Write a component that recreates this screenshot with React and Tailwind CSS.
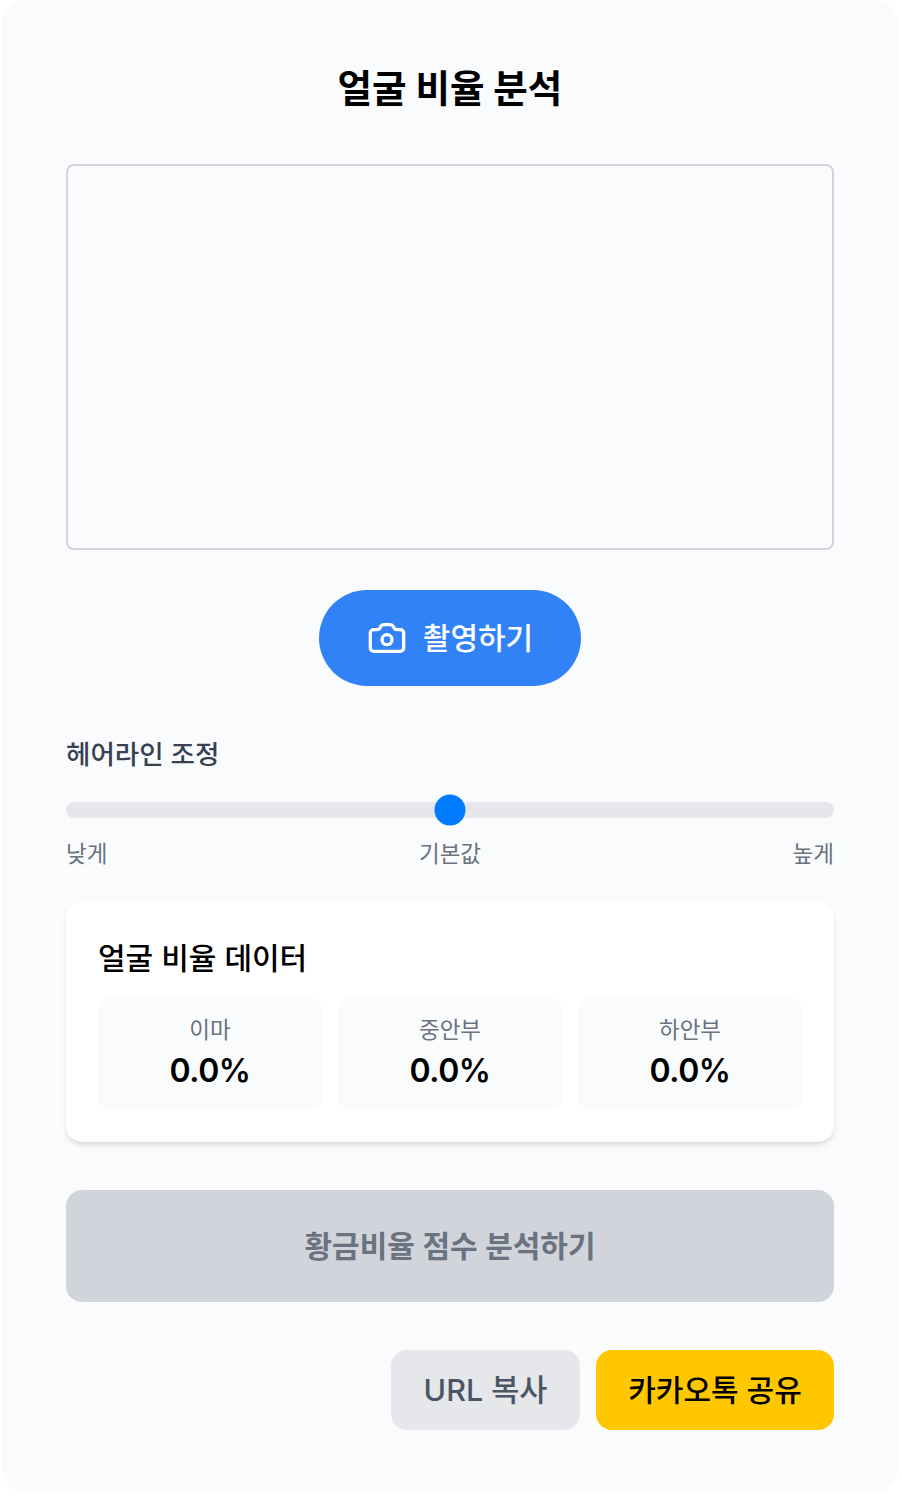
import React from 'react';
import { Camera } from 'lucide-react';

const font = "font-['Inter','Noto_Sans_CJK_KR',sans-serif]";

function Stat({ label }) {
    return (
        <div className="flex-1 h-[112px] bg-[#f9fbfc] rounded-xl pt-[16px] text-center">
            <p className="text-[22.5px] leading-[32px] text-[#6b7280]">{label}</p>
            <p className="mt-[5px] text-[32px] leading-[40px] font-semibold tracking-[-0.5px] text-black">0.0%</p>
        </div>
    );
}

function App() {
    return (
        <div className={`${font} bg-white min-h-[1502px] pl-[2px]`}>
            <div className="w-[896px] h-[1493px] bg-[#fafbfd] rounded-[24px] px-[64px] pt-[65px]">
                <h1 className="text-[37.5px] leading-[48px] font-bold text-black text-center">얼굴 비율 분석</h1>

                <div className="mt-[51px] h-[386px] border-2 border-[#d1d5db] rounded-lg"></div>

                <div className="mt-[40px] flex justify-center">
                    <button className="h-[96px] w-[262px] bg-[#3182f6] text-white rounded-full flex items-center justify-center gap-[16px] text-[30px] font-medium">
                        <Camera className="w-[40px] h-[40px]" strokeWidth={2} />
                        <span>촬영하기</span>
                    </button>
                </div>

                <p className="mt-[50px] text-[26.5px] leading-[36px] font-medium text-[#374151]">헤어라인 조정</p>

                <div className="relative mt-[30px] h-[16px] bg-[#e5e7eb] rounded-full">
                    <div className="absolute left-1/2 top-1/2 -translate-x-1/2 -translate-y-1/2 w-[31px] h-[31px] rounded-full bg-[#007bff]"></div>
                </div>

                <div className="mt-[20px] flex justify-between text-[22.5px] leading-[32px] text-[#6b7280]">
                    <span>낮게</span>
                    <span>기본값</span>
                    <span>높게</span>
                </div>

                <div className="mt-[32px] h-[240px] bg-white rounded-2xl shadow-md p-[32px]">
                    <h2 className="text-[30px] leading-[48px] font-medium text-black">얼굴 비율 데이터</h2>
                    <div className="mt-[16px] flex gap-[16px]">
                        <Stat label="이마" />
                        <Stat label="중안부" />
                        <Stat label="하안부" />
                    </div>
                </div>

                <button className="mt-[48px] w-full h-[112px] bg-[#d1d5db] text-[#6b7280] rounded-2xl text-[30px] font-semibold">
                    황금비율 점수 분석하기
                </button>

                <div className="mt-[48px] flex justify-end gap-[16px]">
                    <button className="h-[80px] w-[189px] bg-[#e5e7eb] text-[#4b5563] rounded-2xl text-[30.5px] font-medium">URL 복사</button>
                    <button className="h-[80px] w-[238px] bg-[#ffc700] text-black rounded-2xl text-[30px] font-medium">카카오톡 공유</button>
                </div>
            </div>
        </div>
    );
}

export default App;
